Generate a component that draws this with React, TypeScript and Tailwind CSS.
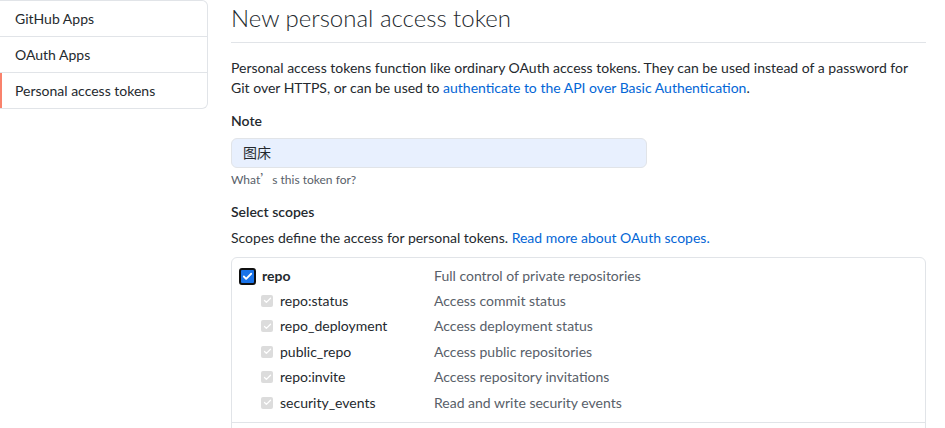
import { Check } from 'lucide-react';

const subScopes = [
  { name: 'repo:status', desc: 'Access commit status' },
  { name: 'repo_deployment', desc: 'Access deployment status' },
  { name: 'public_repo', desc: 'Access public repositories' },
  { name: 'repo:invite', desc: 'Access repository invitations' },
  { name: 'security_events', desc: 'Read and write security events' },
];

export default function App() {
  return (
    <div className="flex gap-[23px] bg-white text-[#24292e] text-[14px] leading-[20px] h-[428px] overflow-hidden" style={{ fontFamily: 'Lato, "Noto Sans CJK SC", sans-serif' }}>
      {/* Sidebar */}
      <div className="w-[208px] shrink-0">
        <div className="border border-l-0 border-[#e1e4e8] rounded-r-md bg-white">
          <div className="px-[15px] h-[36px] flex items-center border-b border-[#e1e4e8]">GitHub Apps</div>
          <div className="px-[15px] h-[36px] flex items-center border-b border-[#e1e4e8]">OAuth Apps</div>
          <div className="px-[15px] h-[35px] flex items-center border-l-2 border-[#f9826c] pl-[13px]">Personal access tokens</div>
        </div>
      </div>

      {/* Main */}
      <div className="w-[695px] shrink-0">
        <h2 className="text-[24px] leading-[36px] font-light pb-[6px] border-b border-[#e1e4e8]">New personal access token</h2>

        <p className="mt-[15px] mb-[13px]">
          Personal access tokens function like ordinary OAuth access tokens. They can be used instead of a password for Git over HTTPS, or can be used to{' '}
          <a className="text-[#0366d6]">authenticate to the API over Basic Authentication</a>.
        </p>

        <div className="font-semibold">Note</div>
        <div className="mt-[7px] w-[416px] h-[30px] rounded-md border border-[#e1e4e8] bg-[#e8f0fe] px-[11px] flex items-center">图床</div>
        <div className="mt-[2px] text-[12px] leading-[18px] text-[#586069]">
          What<span className="font-['Noto_Sans_CJK_SC']">’</span>s this token for?
        </div>

        <div className="mt-[13px] font-semibold">Select scopes</div>
        <div className="mt-[6px]">
          Scopes define the access for personal tokens. <a className="text-[#0366d6]">Read more about OAuth scopes.</a>
        </div>

        <div className="mt-[9px] border border-[#e1e4e8] rounded-md">
          <div className="pt-[6px] pb-[6px] border-b border-[#e1e4e8]">
            <div className="flex items-center h-[24px]">
              <div className="w-[30px] pl-[7px] flex items-center">
                <span className="w-[17px] h-[17px] rounded-[3px] bg-[#1a73e8] border-2 border-[#101010] flex items-center justify-center">
                  <Check className="w-[11px] h-[11px] text-white" strokeWidth={4} />
                </span>
              </div>
              <span className="w-[172px] font-bold">repo</span>
              <span className="text-[#586069]">Full control of private repositories</span>
            </div>
            {subScopes.map((s) => (
              <div key={s.name} className="flex items-center h-[25.5px]">
                <div className="w-[48px] pl-[29px] flex items-center">
                  <span className="w-[12px] h-[12px] rounded-[2px] bg-[#dcdcdc] flex items-center justify-center">
                    <Check className="w-[9px] h-[9px] text-white" strokeWidth={3.5} />
                  </span>
                </div>
                <span className="w-[154px]">{s.name}</span>
                <span className="text-[#586069]">{s.desc}</span>
              </div>
            ))}
          </div>
          <div className="h-[20px]" />
        </div>
      </div>
    </div>
  );
}
